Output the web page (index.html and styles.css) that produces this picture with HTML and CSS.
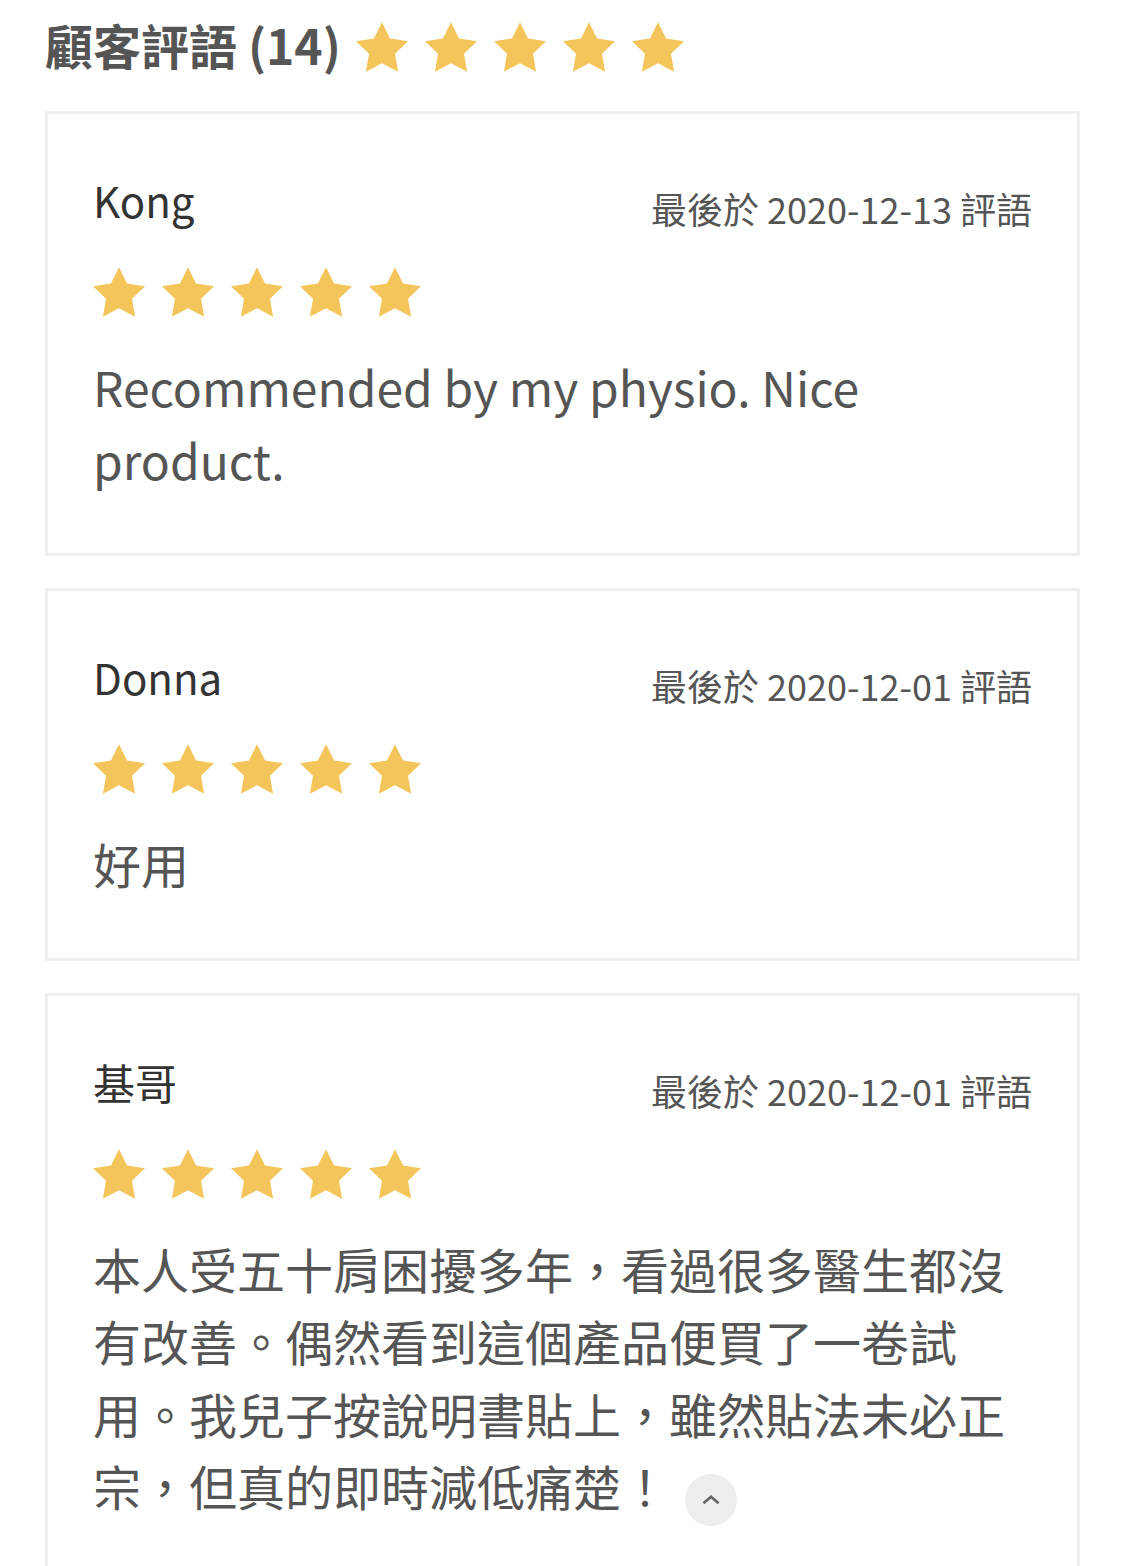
FILE: index.html
```html
<!DOCTYPE html>
<html lang="zh-Hant">
<head>
    <meta charset="UTF-8">
    <meta name="viewport" content="width=device-width, initial-scale=1.0">
    <title>顧客評語</title>
    <link rel="stylesheet" href="styles.css">
</head>
<body>
    <svg class="defs" aria-hidden="true">
        <symbol id="star" viewBox="2 2 20 19.02">
            <path d="M12 2l3.09 6.26L22 9.27l-5 4.87 1.18 6.88L12 17.77l-6.18 3.25L7 14.14 2 9.27l6.91-1.01L12 2z"/>
        </symbol>
    </svg>

    <div class="reviews">
        <div class="reviews-header">
            <h2>顧客評語 (14)</h2>
            <div class="stars">
                <svg class="star"><use href="#star"/></svg>
                <svg class="star"><use href="#star"/></svg>
                <svg class="star"><use href="#star"/></svg>
                <svg class="star"><use href="#star"/></svg>
                <svg class="star"><use href="#star"/></svg>
            </div>
        </div>

        <div class="review">
            <div class="review-top">
                <div class="review-name">Kong</div>
                <div class="review-date">最後於 2020-12-13 評語</div>
            </div>
            <div class="stars review-stars">
                <svg class="star"><use href="#star"/></svg>
                <svg class="star"><use href="#star"/></svg>
                <svg class="star"><use href="#star"/></svg>
                <svg class="star"><use href="#star"/></svg>
                <svg class="star"><use href="#star"/></svg>
            </div>
            <p class="review-text">Recommended by my physio. Nice product.</p>
        </div>

        <div class="review">
            <div class="review-top">
                <div class="review-name">Donna</div>
                <div class="review-date">最後於 2020-12-01 評語</div>
            </div>
            <div class="stars review-stars">
                <svg class="star"><use href="#star"/></svg>
                <svg class="star"><use href="#star"/></svg>
                <svg class="star"><use href="#star"/></svg>
                <svg class="star"><use href="#star"/></svg>
                <svg class="star"><use href="#star"/></svg>
            </div>
            <p class="review-text">好用</p>
        </div>

        <div class="review">
            <div class="review-top">
                <div class="review-name">基哥</div>
                <div class="review-date">最後於 2020-12-01 評語</div>
            </div>
            <div class="stars review-stars">
                <svg class="star"><use href="#star"/></svg>
                <svg class="star"><use href="#star"/></svg>
                <svg class="star"><use href="#star"/></svg>
                <svg class="star"><use href="#star"/></svg>
                <svg class="star"><use href="#star"/></svg>
            </div>
            <p class="review-text">本人受五十肩困擾多年，看過很多醫生都沒有改善。偶然看到這個產品便買了一卷試用。我兒子按說明書貼上，雖然貼法未必正宗，但真的即時減低痛楚！</p>
        </div>
    </div>

    <button class="to-top" aria-label="Back to top">
        <svg viewBox="0 0 24 24"><path d="M5 15l7-6 7 6"/></svg>
    </button>
</body>
</html>
```

FILE: styles.css
```css
body { margin: 0; background: #fff; font-family: "Noto Sans CJK TC", "Noto Sans", sans-serif; color: #555; }
.defs { position: absolute; width: 0; height: 0; }
.reviews { padding: 8px 45px 0; }
.reviews-header { display: flex; align-items: center; gap: 15px; margin-bottom: 31px; }
.reviews-header h2 { margin: 0; font-size: 48px; line-height: 72px; font-weight: 700; color: #555; }
.reviews-header .stars { margin-top: 6px; }
.stars { display: flex; gap: 17px; }
.star { width: 52px; height: 50px; fill: #f4c55a; }
.review { border: 3px solid #efefef; padding: 54px 45px 58px; margin-bottom: 32px; }
.review-top { display: flex; justify-content: space-between; align-items: flex-start; }
.review-name { font-size: 42px; line-height: 63px; color: #333; }
.review-date { font-size: 36px; line-height: 54px; margin-top: 13px; color: #555; }
.review-stars { margin-top: 32px; }
.review-text { margin: 33px 0 0; font-size: 48px; line-height: 72.5px; color: #555; }
.to-top { position: fixed; left: 685px; bottom: 40px; width: 52px; height: 52px; border: none; border-radius: 50%; background: #eee; padding: 0; display: flex; align-items: center; justify-content: center; }
.to-top svg { width: 26px; height: 26px; fill: none; stroke: #666; stroke-width: 2.5; }
```
